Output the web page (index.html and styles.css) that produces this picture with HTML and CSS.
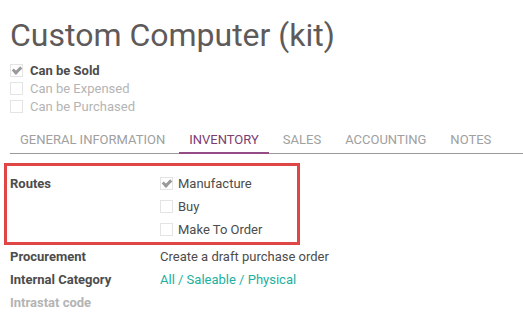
FILE: index.html
```html
<!DOCTYPE html>
<html lang="en">
<head>
    <meta charset="UTF-8">
    <title>Custom Computer (kit)</title>
    <link rel="stylesheet" href="styles.css">
</head>
<body>
    <div class="sheet">
        <h1 class="title">Custom Computer (kit)</h1>

        <div class="options">
            <div class="opt on"><span class="check checked"></span>Can be Sold</div>
            <div class="opt"><span class="check"></span>Can be Expensed</div>
            <div class="opt"><span class="check"></span>Can be Purchased</div>
        </div>

        <ul class="tabs">
            <li>General Information</li>
            <li class="active">Inventory</li>
            <li>Sales</li>
            <li>Accounting</li>
            <li>Notes</li>
        </ul>

        <div class="routes">
            <div class="label">Routes</div>
            <div class="route-list">
                <div class="route"><span class="check checked"></span>Manufacture</div>
                <div class="route"><span class="check"></span>Buy</div>
                <div class="route"><span class="check"></span>Make To Order</div>
            </div>
        </div>

        <div class="fields">
            <div class="label">Procurement</div>
            <div class="value">Create a draft purchase order</div>
            <div class="label">Internal Category</div>
            <div class="value link">All / Saleable / Physical</div>
            <div class="label muted">Intrastat code</div>
            <div class="value"></div>
        </div>
    </div>
</body>
</html>
```

FILE: styles.css
```css
body {
    margin: 0;
    padding: 0;
    font-family: Roboto, "Liberation Sans", sans-serif;
    font-size: 13px;
    color: #4c4c4c;
    background: #fff;
}

.sheet {
    padding: 16px 0 0 10px;
}

.title {
    margin: 0;
    font-size: 32px;
    font-weight: 400;
    line-height: 38px;
    color: #5f5a5a;
}

.options {
    margin-top: 7px;
}

.opt {
    display: flex;
    align-items: center;
    height: 18px;
    color: #b4b4b4;
}

.opt.on {
    color: #4c4c4c;
    font-weight: 700;
}

.check {
    width: 13px;
    height: 13px;
    border: 1px solid #e4e4e4;
    box-sizing: border-box;
    margin-right: 7px;
    position: relative;
    flex: none;
}

.check.checked::after {
    content: "";
    position: absolute;
    left: 3px;
    top: 0;
    width: 3px;
    height: 6px;
    border: solid #9a9a9a;
    border-width: 0 3px 3px 0;
    transform: rotate(45deg);
}

.tabs {
    list-style: none;
    margin: 13px 0 0 0;
    padding: 0;
    display: flex;
    gap: 4px;
    border-bottom: 1px solid #9a9a9a;
}

.tabs li {
    padding: 4px 10px 5px 10px;
    text-transform: uppercase;
    color: #a0a0a0;
    font-size: 13px;
    margin-bottom: -1px;
    border-bottom: 2px solid transparent;
}

.tabs li.active {
    color: #7c3d71;
    border-bottom-color: #934c85;
}

.routes {
    margin: 9px 0 0 -6px;
    width: 287px;
    height: 70px;
    border: 3px solid #e04646;
    display: flex;
    padding: 6px 0 0 3px;
    box-sizing: content-box;
}

.routes .label {
    width: 150px;
    line-height: 23px;
}

.route {
    display: flex;
    align-items: center;
    height: 23px;
}

.route .check {
    margin-right: 5px;
}

.label {
    font-weight: 700;
    color: #4c4c4c;
}

.fields {
    display: grid;
    grid-template-columns: 150px 1fr;
    grid-auto-rows: 23px;
    margin-top: 0;
    align-items: center;
}

.value.link {
    color: #21b0a0;
}

.label.muted {
    color: #b4b4b4;
}
```
